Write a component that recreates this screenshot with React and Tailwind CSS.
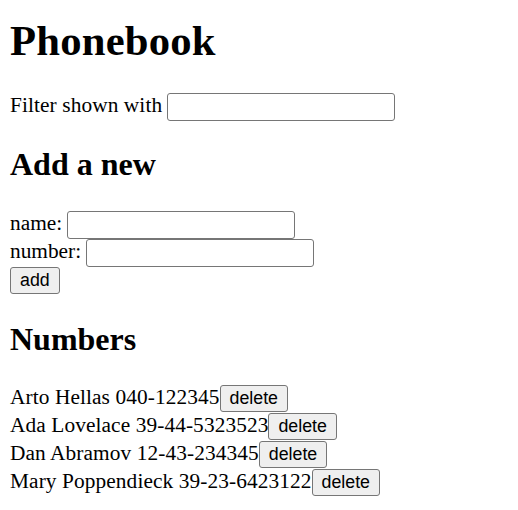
import React, { useState } from 'react';

const persons = [
  { name: 'Arto Hellas', number: '040-122345' },
  { name: 'Ada Lovelace', number: '39-44-5323523' },
  { name: 'Dan Abramov', number: '12-43-234345' },
  { name: 'Mary Poppendieck', number: '39-23-6423122' },
];

const Input = ({ value, onChange }) => (
  <input
    value={value}
    onChange={onChange}
    className="ml-[5px] w-[228px] h-[28px] border border-[#767676] rounded-[3px] bg-white px-[3px] text-[17.78px] font-['Liberation_Sans',sans-serif] outline-none"
  />
);

const Button = ({ children }) => (
  <button className="h-[27px] px-[9px] border border-[#767676] rounded-[3px] bg-[#efefef] text-[17.78px] leading-[25px] text-black font-['Liberation_Sans',Arial,sans-serif]">
    {children}
  </button>
);

export default function App() {
  const [filter, setFilter] = useState('');
  const [newName, setNewName] = useState('');
  const [newNumber, setNewNumber] = useState('');

  const shown = persons.filter(p => p.name.toLowerCase().includes(filter.toLowerCase()));

  return (
    <div className="px-[10px] pb-[10px] text-black bg-white text-[21.33px] font-['Liberation_Serif','Times_New_Roman',serif]">
      <h1 className="mt-[16px] text-[42.67px] leading-[49px] font-bold tracking-[0.2px]">Phonebook</h1>

      <div className="mt-[28px] flex items-start">
        <span className="leading-[24px] whitespace-pre tracking-[0.1px]">Filter shown with</span>
        <Input value={filter} onChange={e => setFilter(e.target.value)} />
      </div>

      <h2 className="mt-[25px] text-[32px] leading-[37px] font-bold">Add a new</h2>

      <form className="mt-[28px]" onSubmit={e => e.preventDefault()}>
        <div className="flex items-start h-[28px]">
          <span className="leading-[24px]">name:</span>
          <Input value={newName} onChange={e => setNewName(e.target.value)} />
        </div>
        <div className="flex items-start h-[28px]">
          <span className="leading-[24px]">number:</span>
          <Input value={newNumber} onChange={e => setNewNumber(e.target.value)} />
        </div>
        <div className="flex">
          <Button>add</Button>
        </div>
      </form>

      <h2 className="mt-[27px] text-[32px] leading-[37px] font-bold">Numbers</h2>

      <div className="mt-[27px]">
        {shown.map(p => (
          <div key={p.name} className="flex items-start h-[28px]">
            <span className="leading-[24px] whitespace-pre tracking-[0.1px]">{p.name} {p.number}</span>
            <Button>delete</Button>
          </div>
        ))}
      </div>
    </div>
  );
}
